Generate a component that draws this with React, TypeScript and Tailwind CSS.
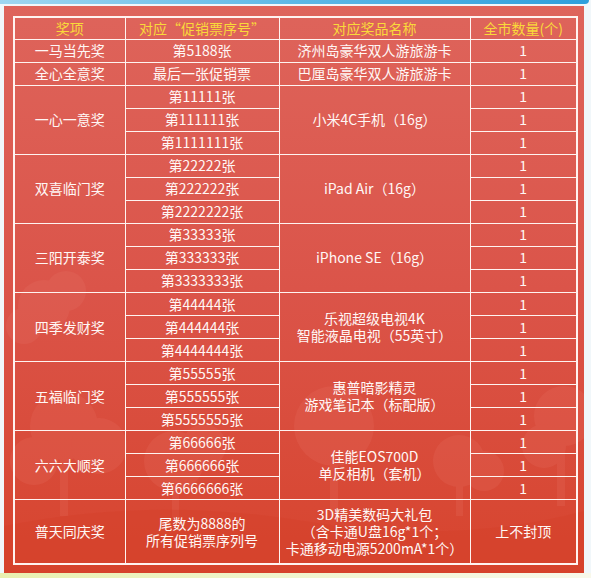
import React from "react";

type Group = {
  prize: string;
  tickets: string[];
  item: string[];
};

const groups: Group[] = [
  { prize: "一马当先奖", tickets: ["第5188张"], item: ["济州岛豪华双人游旅游卡"] },
  { prize: "全心全意奖", tickets: ["最后一张促销票"], item: ["巴厘岛豪华双人游旅游卡"] },
  { prize: "一心一意奖", tickets: ["第11111张", "第111111张", "第1111111张"], item: ["小米4C手机（16g）"] },
  { prize: "双喜临门奖", tickets: ["第22222张", "第222222张", "第2222222张"], item: ["iPad Air（16g）"] },
  { prize: "三阳开泰奖", tickets: ["第33333张", "第333333张", "第3333333张"], item: ["iPhone SE（16g）"] },
  { prize: "四季发财奖", tickets: ["第44444张", "第444444张", "第4444444张"], item: ["乐视超级电视4K", "智能液晶电视（55英寸）"] },
  { prize: "五福临门奖", tickets: ["第55555张", "第555555张", "第5555555张"], item: ["惠普暗影精灵", "游戏笔记本（标配版）"] },
  { prize: "六六大顺奖", tickets: ["第66666张", "第666666张", "第6666666张"], item: ["佳能EOS700D", "单反相机（套机）"] },
];

const cell = "border border-[#fff3f0] text-center align-middle p-0 leading-[17px] whitespace-nowrap";

function Lines({ lines }: { lines: string[] }) {
  return (
    <>
      {lines.map((l) => (
        <div key={l}>{l}</div>
      ))}
    </>
  );
}

// faint trees / clouds painted behind the table
function Scenery() {
  return (
    <svg className="absolute inset-0 pointer-events-none" width="580" height="567" viewBox="0 0 580 567">
      <g fill="#e7786c" opacity="0.2">
        <circle cx="40" cy="300" r="26" />
        <circle cx="62" cy="285" r="20" />
        <circle cx="20" cy="320" r="18" />
      </g>
      <g fill="#e5695a" opacity="0.28">
        <circle cx="60" cy="420" r="34" />
        <circle cx="95" cy="440" r="28" />
        <circle cx="30" cy="455" r="24" />
        <rect x="56" y="450" width="8" height="60" />
        <circle cx="170" cy="455" r="30" />
        <circle cx="200" cy="440" r="22" />
        <rect x="168" y="470" width="7" height="45" />
        <circle cx="330" cy="420" r="40" />
        <rect x="326" y="450" width="8" height="60" />
        <circle cx="455" cy="455" r="26" />
        <circle cx="480" cy="465" r="20" />
        <rect x="452" y="470" width="7" height="40" />
        <circle cx="560" cy="410" r="30" />
        <circle cx="540" cy="440" r="22" />
        <rect x="553" y="440" width="8" height="60" />
      </g>
      <path d="M0 520 Q150 490 300 515 T580 505 L580 567 L0 567 Z" fill="#d43e28" opacity="0.35" />
    </svg>
  );
}

export default function App() {
  return (
    <div
      className="relative w-[591px] h-[578px] overflow-hidden bg-[#f1f7fa]"
      style={{ fontFamily: '"Noto Sans CJK SC", "Noto Sans", sans-serif' }}
    >
      {/* top strip */}
      <div className="absolute left-0 top-0 w-[589px] h-[4px] rounded-br-[6px] bg-gradient-to-r from-[#9fd6f0] via-[#5cb8e6] to-[#2d9fdc]" />
      <div className="absolute left-0 bottom-0 w-full h-[5px] bg-gradient-to-r from-[#e9f0b0] to-[#f8f8ea]" />

      <div className="absolute left-[4px] top-[6px] w-[580px] h-[567px] bg-gradient-to-b from-[#de645b] via-[#db5449] to-[#d7442d] pt-[10px] pl-[9px] pr-[8px] pb-[8px]">
        <Scenery />
        <table className="relative border-collapse border-2 border-[#fff3f0] text-[14px] text-[#fff7f5] w-[563px] h-[549px] table-fixed">
          <colgroup>
            <col className="w-[111px]" />
            <col className="w-[154px]" />
            <col className="w-[191px]" />
            <col className="w-[107px]" />
          </colgroup>
          <thead>
            <tr className="h-[22px] text-[#f9d93a]">
              <th className={`${cell} font-normal`}>奖项</th>
              <th className={`${cell} font-normal`}>对应“促销票序号”</th>
              <th className={`${cell} font-normal`}>对应奖品名称</th>
              <th className={`${cell} font-normal`}>全市数量(个)</th>
            </tr>
          </thead>
          <tbody>
            {groups.map((g) =>
              g.tickets.map((t, i) => (
                <tr key={g.prize + t} className="h-[22px]">
                  {i === 0 && (
                    <td className={cell} rowSpan={g.tickets.length}>
                      {g.prize}
                    </td>
                  )}
                  <td className={cell}>{t}</td>
                  {i === 0 && (
                    <td className={cell} rowSpan={g.tickets.length}>
                      <Lines lines={g.item} />
                    </td>
                  )}
                  <td className={cell}>1</td>
                </tr>
              ))
            )}
            <tr className="h-[61px]">
              <td className={cell}>普天同庆奖</td>
              <td className={cell}>
                <Lines lines={["尾数为8888的", "所有促销票序列号"]} />
              </td>
              <td className={cell}>
                <Lines lines={["3D精美数码大礼包", "（含卡通U盘16g*1个；", "卡通移动电源5200mA*1个）"]} />
              </td>
              <td className={cell}>上不封顶</td>
            </tr>
          </tbody>
        </table>
      </div>
    </div>
  );
}
